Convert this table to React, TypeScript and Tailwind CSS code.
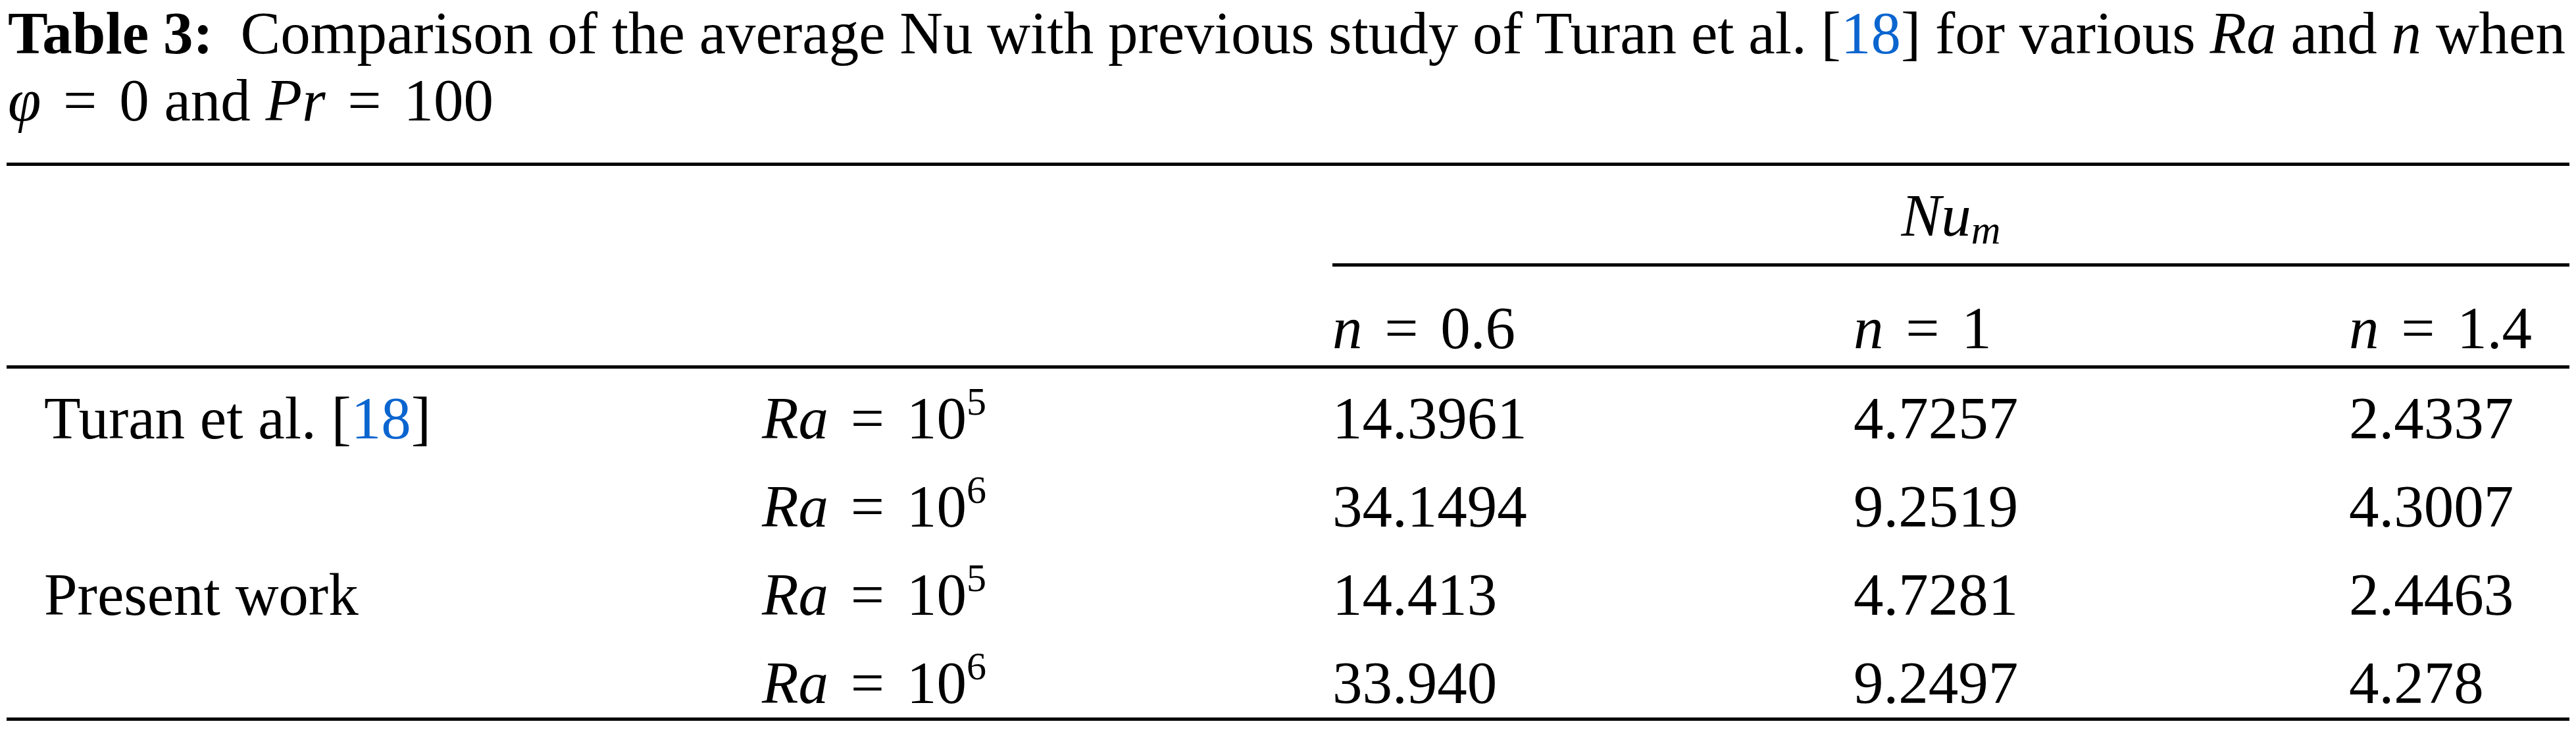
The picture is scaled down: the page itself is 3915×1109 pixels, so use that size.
import React from "react";

const Eq = () => <span className="mx-[11px]">=</span>;

const RaCell = ({ p }: { p: number }) => (
  <span>
    <i>Ra</i> <Eq /> 10
    <span className="text-[60px] leading-[0px] [vertical-align:36px]">{p}</span>
  </span>
);

type Row = { label: React.ReactNode; ra: number; v: string[] };

const rows: Row[] = [
  {
    label: (
      <>
        Turan et al. [<span className="text-[#0b65cf]">18</span>]
      </>
    ),
    ra: 5,
    v: ["14.3961", "4.7257", "2.4337"],
  },
  { label: null, ra: 6, v: ["34.1494", "9.2519", "4.3007"] },
  { label: "Present work", ra: 5, v: ["14.413", "4.7281", "2.4463"] },
  { label: null, ra: 6, v: ["33.940", "9.2497", "4.278"] },
];

export default function App() {
  return (
    <div className="w-[3915px] h-[1109px] bg-white text-black overflow-hidden font-['Liberation_Serif','Times_New_Roman',serif] text-[91px]">
      <div className="mx-[10px]">
        {/* Caption */}
        <div className="leading-[102px] whitespace-nowrap text-justify [text-align-last:justify] [word-spacing:-5px] pl-[2px] pr-[6px]">
          <b className="mr-[20px]">Table 3:</b> Comparison of the average Nu with previous study of Turan et al. [
          <span className="text-[#0b65cf]">18</span>] for various <i>Ra</i> and <i>n</i> when
        </div>
        <div className="leading-[101px] whitespace-nowrap pl-[2px]">
          <i>φ</i> <Eq /> 0 and <i>Pr</i> <Eq /> 100
        </div>

        {/* Table */}
        <div className="mt-[44px] border-t-[5px] border-black">
          {/* Header row A */}
          <div className="flex h-[153px]">
            <div className="w-[2015px] shrink-0" />
            <div className="flex-1 border-b-[5px] border-black pt-[30px] leading-[91px] text-center">
              <i>Nu</i>
              <i className="text-[62px] leading-[0px] [vertical-align:-12px]">m</i>
            </div>
          </div>
          {/* Header row B */}
          <div className="grid grid-cols-[1148px_867px_792px_753px_1fr] h-[155px] pt-[48px] leading-[91px] border-b-[5px] border-black whitespace-nowrap">
            <div />
            <div />
            <div>
              <i>n</i> <Eq /> 0.6
            </div>
            <div>
              <i>n</i> <Eq /> 1
            </div>
            <div>
              <i>n</i> <Eq /> 1.4
            </div>
          </div>
          {/* Data rows */}
          {rows.map((r, i) => (
            <div
              key={i}
              className={
                "grid grid-cols-[1148px_867px_792px_753px_1fr] pt-[30px] leading-[91px] whitespace-nowrap " +
                (i === rows.length - 1 ? "h-[133px] border-b-[5px] border-black" : "h-[134px]")
              }
            >
              <div className="pl-[57px]">{r.label}</div>
              <div>
                <RaCell p={r.ra} />
              </div>
              {r.v.map((x, j) => (
                <div key={j}>{x}</div>
              ))}
            </div>
          ))}
        </div>
      </div>
    </div>
  );
}
